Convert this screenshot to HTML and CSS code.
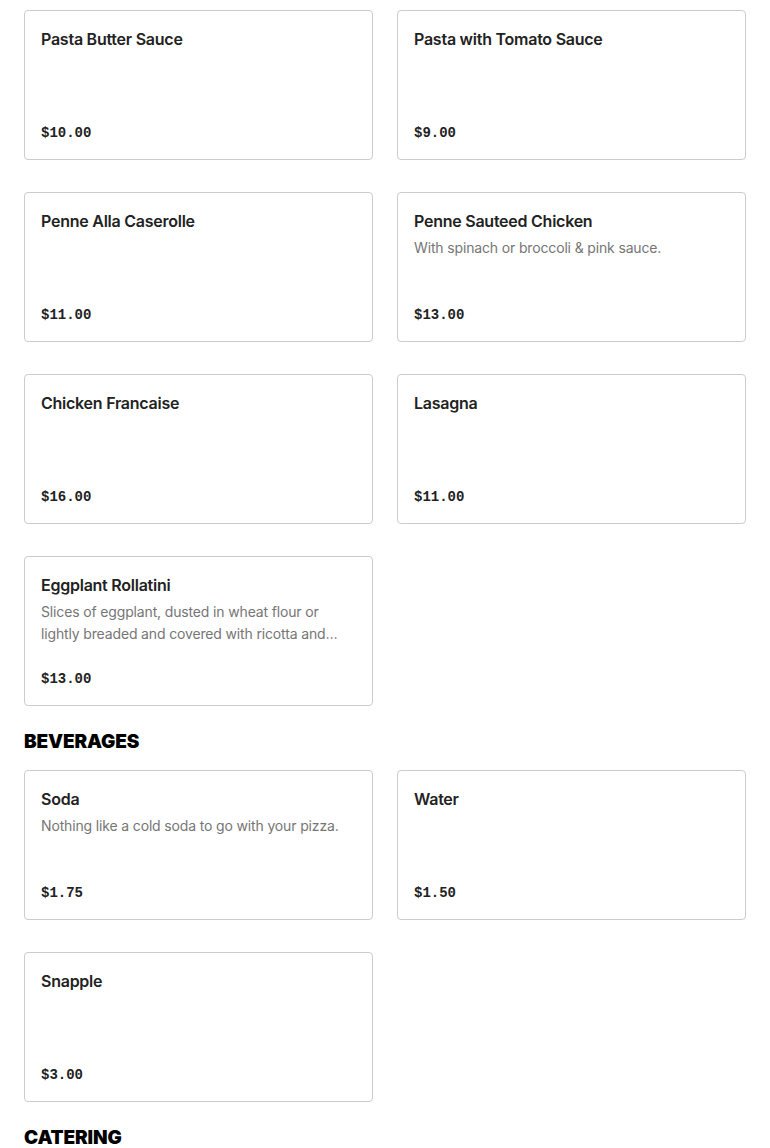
FILE: index.html
```html
<!DOCTYPE html>
<html lang="en">
<head>
<meta charset="utf-8">
<title>Menu</title>
<link rel="stylesheet" href="styles.css">
</head>
<body>
<main class="menu">
  <section class="section">
    <div class="grid">
      <article class="card"><h3 class="name">Pasta Butter Sauce</h3><div class="price">$10.00</div></article>
      <article class="card"><h3 class="name">Pasta with Tomato Sauce</h3><div class="price">$9.00</div></article>
      <article class="card"><h3 class="name">Penne Alla Caserolle</h3><div class="price">$11.00</div></article>
      <article class="card"><h3 class="name">Penne Sauteed Chicken</h3><p class="desc">With spinach or broccoli &amp; pink sauce.</p><div class="price">$13.00</div></article>
      <article class="card"><h3 class="name">Chicken Francaise</h3><div class="price">$16.00</div></article>
      <article class="card"><h3 class="name">Lasagna</h3><div class="price">$11.00</div></article>
      <article class="card"><h3 class="name">Eggplant Rollatini</h3><p class="desc">Slices of eggplant, dusted in wheat flour or lightly breaded and covered with ricotta and mozzarella cheese, baked in tomato sauce.</p><div class="price">$13.00</div></article>
    </div>
  </section>
  <section class="section">
    <h2 class="heading">BEVERAGES</h2>
    <div class="grid">
      <article class="card"><h3 class="name">Soda</h3><p class="desc">Nothing like a cold soda to go with your pizza.</p><div class="price">$1.75</div></article>
      <article class="card"><h3 class="name">Water</h3><div class="price">$1.50</div></article>
      <article class="card"><h3 class="name">Snapple</h3><div class="price">$3.00</div></article>
    </div>
  </section>
  <section class="section">
    <h2 class="heading">CATERING</h2>
  </section>
</main>
</body>
</html>
```
FILE: styles.css
```css
html, body {
  margin: 0;
  padding: 0;
  background: #ffffff;
}
body {
  font-family: "Inter", "Liberation Sans", sans-serif;
  color: #222222;
}
.menu {
  padding: 10px 24px 0 24px;
  display: flex;
  flex-direction: column;
}
.section + .section {
  margin-top: 24px;
}
.heading {
  margin: 0 0 16px 0;
  font-family: "Inter", "Liberation Sans", sans-serif;
  font-weight: 900;
  font-size: 19px;
  line-height: 24px;
  color: #000000;
  letter-spacing: -0.15px;
}
.grid {
  display: grid;
  grid-template-columns: 1fr 1fr;
  column-gap: 24px;
  row-gap: 32px;
}
.card {
  box-sizing: border-box;
  height: 150px;
  border: 1px solid #cccccc;
  border-radius: 4px;
  padding: 16px 16px 14px 16px;
  display: flex;
  flex-direction: column;
}
.name {
  margin: 0;
  font-size: 16px;
  font-weight: 600;
  line-height: 24px;
  letter-spacing: -0.25px;
  color: #222222;
}
.desc {
  margin: 4px 0 0 0;
  font-size: 14px;
  line-height: 22px;
  letter-spacing: -0.15px;
  color: #767676;
  display: -webkit-box;
  -webkit-line-clamp: 2;
  -webkit-box-orient: vertical;
  overflow: hidden;
}
.price {
  margin-top: auto;
  font-family: "Liberation Mono", "DejaVu Sans Mono", monospace;
  font-weight: 700;
  font-size: 14px;
  line-height: 24px;
  color: #222222;
}
```
